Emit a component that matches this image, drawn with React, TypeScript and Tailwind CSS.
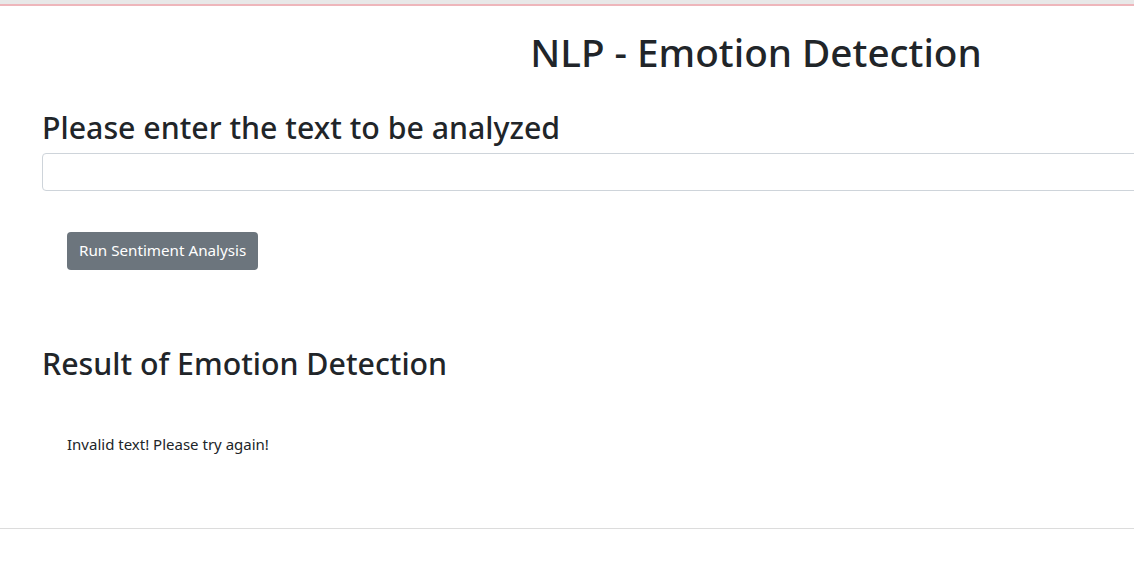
import React from "react";

export default function App() {
  return (
    <div className="w-[1134px] h-[564px] overflow-hidden bg-white text-[#212529]" style={{ fontFamily: '"Noto Sans", "Open Sans", sans-serif' }}>
      <div className="h-[4px] bg-[#e8e8e8]" />
      <div className="h-[2px] bg-[#eeb6bb]" />
      <div className="w-[1428px] ml-[42px]">
        <h1 className="text-center text-[38.7px] font-medium leading-[1.2] pt-[23px]">NLP - Emotion Detection</h1>
        <h2 className="text-[30.3px] font-medium leading-[1.2] mt-[35px]">Please enter the text to be analyzed</h2>
        <input type="text" className="block w-full h-[38px] mt-[6px] border border-[#ced4da] rounded-[4px] outline-none" />
        <div className="mt-[41px] pl-[25px]">
          <button className="h-[38px] px-[12px] bg-[#6c757d] text-white text-[15.2px] rounded-[4px] leading-none">Run Sentiment Analysis</button>
        </div>
        <h2 className="text-[30.3px] font-medium leading-[1.2] mt-[76px]">Result of Emotion Detection</h2>
        <p className="text-[15px] mt-[51px] pl-[25px]">Invalid text! Please try again!</p>
      </div>
      <div className="mt-[72px] h-[1px] bg-[#dcdcdc]" />
    </div>
  );
}
